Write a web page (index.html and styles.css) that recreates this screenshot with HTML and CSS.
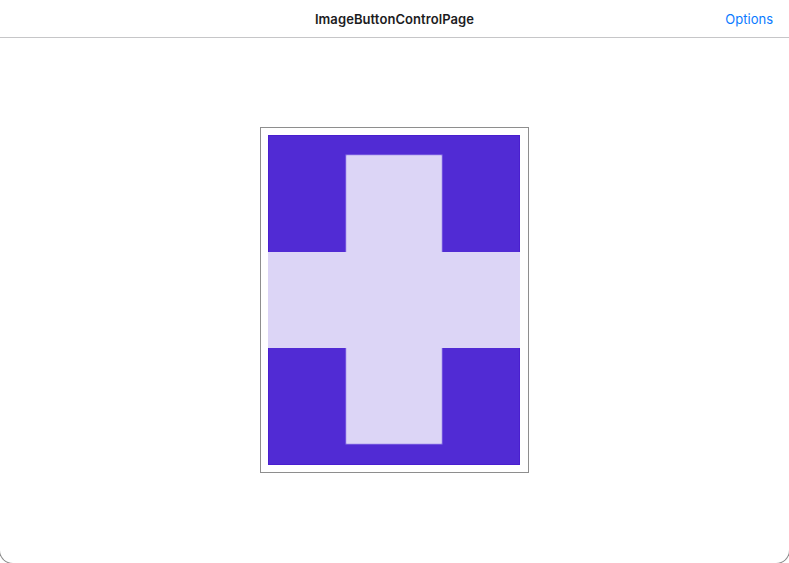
FILE: index.html
```html
<!DOCTYPE html>
<html>
<head>
<meta charset="utf-8">
<link rel="stylesheet" href="styles.css">
</head>
<body>
<div class="app">
  <header class="navbar">
    <div class="title">ImageButtonControlPage</div>
    <div class="options">Options</div>
  </header>
  <main class="content">
    <div class="image-button">
      <svg class="image" width="252" height="330" viewBox="0 0 252 330">
        <rect x="0.5" y="0.5" width="251" height="329" fill="#512bd4" stroke="#4a1fcf"/>
        <rect x="78" y="20" width="96" height="289" fill="#dcd5f6" stroke="#8f78e6" stroke-width="1"/>
        <rect x="0" y="117" width="252" height="96" fill="#dcd5f6"/>
        <rect x="78.5" y="20.5" width="95" height="288" fill="#dcd5f6"/>
      </svg>
    </div>
  </main>
</div>
</body>
</html>
```

FILE: styles.css
```css
html, body {
  margin: 0;
  padding: 0;
  background: #ffffff;
}
.app {
  width: 789px;
  height: 563px;
  display: flex;
  flex-direction: column;
  overflow: hidden;
  border-radius: 0 0 13px 13px;
  box-shadow: 0 0 0 1px #8a8a8a;
  background: #fff;
  font-family: Inter, "Liberation Sans", sans-serif;
}
.navbar {
  height: 37px;
  flex: none;
  border-bottom: 1px solid #c6c6c8;
  display: flex;
  align-items: center;
  justify-content: center;
  position: relative;
}
.title {
  font-size: 13px;
  font-weight: 600;
  color: #1c1c1e;
  letter-spacing: 0.08px;
}
.options {
  position: absolute;
  right: 16px;
  top: 11px;
  font-size: 13px;
  color: #0a7aff;
}
.content {
  flex: 1;
  display: flex;
  align-items: center;
  justify-content: center;
  padding-bottom: 2px;
}
.image-button {
  border: 1px solid #8e8e8e;
  padding: 7px 8px 7px 7px;
  display: flex;
}
.image {
  display: block;
}
```
